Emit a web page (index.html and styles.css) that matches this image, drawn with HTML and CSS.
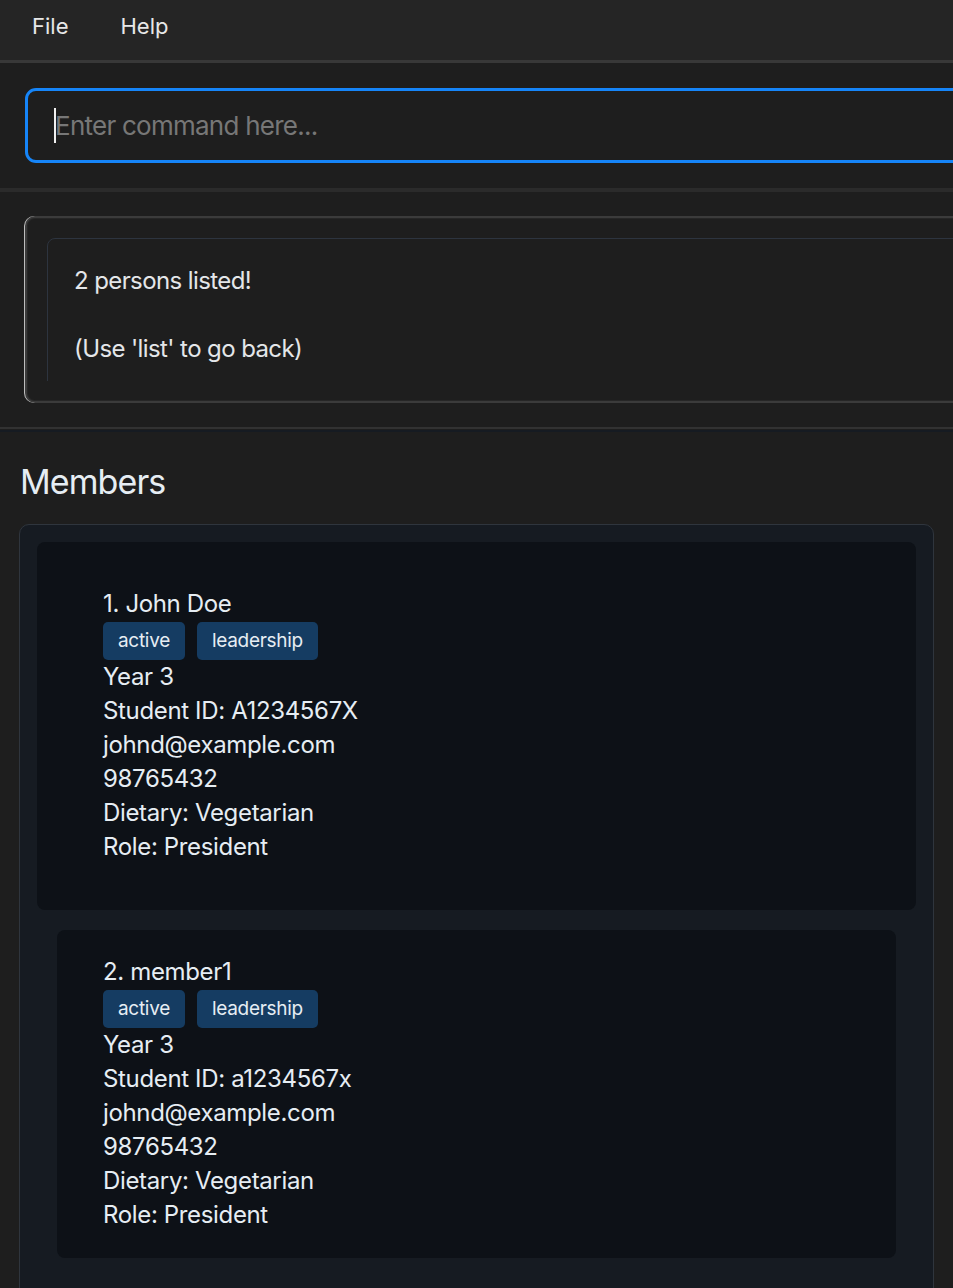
FILE: index.html
```html
<!DOCTYPE html>
<html lang="en">
<head>
<meta charset="utf-8">
<title>Members</title>
<link rel="stylesheet" href="styles.css">
</head>
<body>
<div class="app">
  <div class="wide">
    <nav class="menubar">
      <span class="menu-item">File</span>
      <span class="menu-item">Help</span>
    </nav>
    <section class="command-area">
      <div class="command-box">
        <span class="caret"></span><span class="placeholder">Enter command here...</span>
      </div>
    </section>
    <section class="result-area">
      <div class="result-frame">
        <div class="result-viewport">
          <div class="result-text">
            <p class="line">2 persons listed!</p>
            <p class="line">&nbsp;</p>
            <p class="line">(Use 'list' to go back)</p>
          </div>
        </div>
      </div>
    </section>
  </div>
  <div class="divider"></div>
  <section class="members">
    <h1 class="members-title">Members</h1>
    <div class="member-list">
      <article class="card card-first">
        <div class="line">1. John Doe</div>
        <div class="tags"><span class="tag">active</span><span class="tag">leadership</span></div>
        <div class="line">Year 3</div>
        <div class="line">Student ID: A1234567X</div>
        <div class="line">johnd@example.com</div>
        <div class="line">98765432</div>
        <div class="line">Dietary: Vegetarian</div>
        <div class="line">Role: President</div>
      </article>
      <article class="card card-next">
        <div class="line">2. member1</div>
        <div class="tags"><span class="tag">active</span><span class="tag">leadership</span></div>
        <div class="line">Year 3</div>
        <div class="line">Student ID: a1234567x</div>
        <div class="line">johnd@example.com</div>
        <div class="line">98765432</div>
        <div class="line">Dietary: Vegetarian</div>
        <div class="line">Role: President</div>
      </article>
    </div>
  </section>
</div>
</body>
</html>
```

FILE: styles.css
```css
html, body {
  margin: 0;
  padding: 0;
  background: #1e1e1e;
  overflow: hidden;
}
body {
  font-family: "Inter", "Noto Sans", sans-serif;
  color: #e6edf3;
  width: 953px;
  height: 1288px;
}
.app {
  width: 953px;
  height: 1288px;
  overflow: hidden;
}
.wide {
  width: 1100px;
}
.menubar {
  display: flex;
  align-items: center;
  height: 52px;
  padding: 0 0 8px 6px;
  background: #252525;
  border-bottom: 3px solid #383838;
}
.menu-item {
  padding: 0 26px;
  font-size: 22px;
  color: #e8e8e8;
}
.command-area {
  padding: 25px;
  background: #1e1e1e;
  border-bottom: 4px solid #2b2b2b;
}
.command-box {
  display: flex;
  align-items: center;
  height: 69px;
  padding-left: 26px;
  border: 3px solid #1685f8;
  border-radius: 11px;
  background: #1e1e1e;
}
.caret {
  display: inline-block;
  width: 2px;
  height: 35px;
  background: #f0f0f0;
  margin-right: -1px;
}
.placeholder {
  font-size: 26px;
  color: #777777;
  letter-spacing: -0.75px;
}
.result-area {
  padding: 24px 25px;
}
.result-frame {
  position: relative;
  border: 2px solid #3b3b3b;
  border-radius: 10px;
  box-shadow: -1px 0 0 #bdbdbd, inset 0 0 0 1px #262626;
  padding: 20px;
  height: 143px;
  background: #1e1e1e;
}
.result-viewport {
  height: 143px;
  overflow: hidden;
}
.result-text {
  height: 200px;
  border: 1px solid #2d343f;
  border-radius: 8px;
  padding: 25px 26px;
  box-sizing: border-box;
}
.line {
  margin: 0;
  font-size: 24px;
  line-height: 34px;
  color: #e4e6e9;
  letter-spacing: -0.6px;
}
.divider {
  height: 2px;
  background: #323232;
  border-bottom: 1px solid #1e1e1e;
}
.members {
  border-top: 2px solid #161b22;
  padding: 30px 19px 0;
}
.members-title {
  margin: 0 0 22px 1px;
  font-size: 34px;
  font-weight: 400;
  line-height: 40px;
  color: #e6edf3;
  letter-spacing: -0.9px;
}
.member-list {
  height: 1000px;
  padding: 17px;
  border: 1px solid #2f353d;
  border-radius: 10px;
  background: #161b22;
}
.card {
  background: #0d1117;
  border-radius: 8px;
}
.card .line {
  color: #e6edf3;
  letter-spacing: -0.35px;
}
.card-first {
  padding: 45px 66px 46px;
}
.card-next {
  margin: 20px 20px 0;
  padding: 25px 46px 26px;
}
.tags {
  display: flex;
  gap: 12px;
  margin-top: 1px;
}
.tag {
  height: 38px;
  line-height: 38px;
  padding: 0 15px;
  border-radius: 5px;
  background: #153c62;
  font-size: 19px;
  color: #e6edf3;
  letter-spacing: -0.3px;
}
```
